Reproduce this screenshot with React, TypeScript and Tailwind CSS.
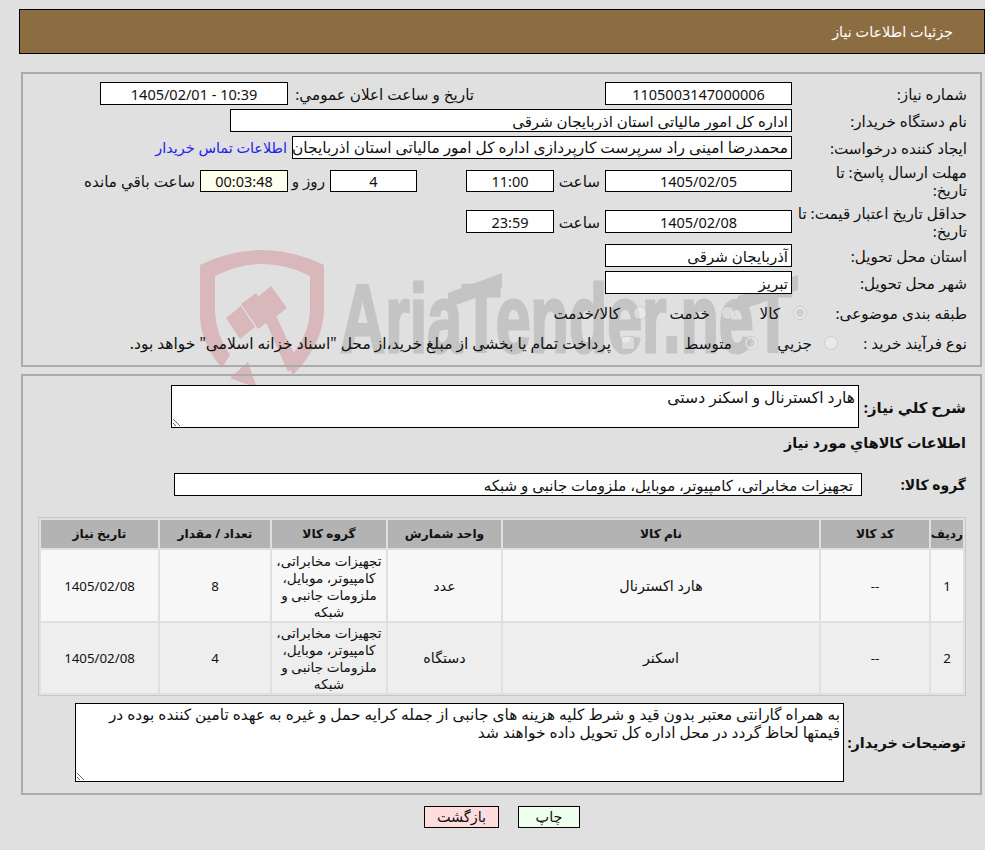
import React from 'react';

// Watermark logo behind the form
const Watermark = () => (
  <svg className="absolute left-0 top-0 pointer-events-none" width="985" height="400" viewBox="0 0 985 400">
    <path d="M200 265 Q262 235 324 265 L324 312 Q322 345 293 375 L285 362 Q308 340 310 312 L310 276 Q262 252 215 276 L215 312 Q216 335 230 355 L222 368 Q202 345 200 318 Z" fill="#d8b8ba" />
    <g fill="#d8b8ba">
      <path d="M226 318 L241 306 L255 327 L240 339 Z" />
      <path d="M241 304 L256 293 L273 318 L258 329 Z" />
      <path d="M258 297 L271 286 L287 308 L273 319 Z" />
      <path d="M266 322 L276 316 L298 362 L288 372 Z" />
      <path d="M230 378 L248 362 L257 388 Z" />
    </g>
    <text direction="ltr" x="340" y="352" fill="#c4c4c4" stroke="#c4c4c4" strokeWidth="3" fontSize="97" fontWeight="700" fontFamily="'Liberation Sans', sans-serif" textLength="452" lengthAdjust="spacingAndGlyphs">AriaTender.neT</text>
    <g fill="#c4c4c4">
      <path d="M448 293 L502 273 L502 288 L448 308 Z" />
      <path d="M738 296 L798 275 L798 290 L738 311 Z" />
    </g>
  </svg>
);

const Field = ({ w, children, bg = 'bg-white', center = false, h = 'h-[23px]', num = false }: { w: string; children?: React.ReactNode; bg?: string; center?: boolean; h?: string; num?: boolean }) => (
  <div className={`${w} ${h} ${bg} border border-black shrink-0 flex items-center overflow-hidden whitespace-nowrap px-[3px] ${center ? 'justify-center' : ''} ${num ? 'text-[14.5px]' : 'text-[15px]'}`}>
    {children}
  </div>
);

const Label = ({ children, w = 'w-[175px]' }: { children: React.ReactNode; w?: string }) => (
  <div className={`${w} shrink-0`}>{children}</div>
);

const Radio = ({ checked = false }: { checked?: boolean }) => (
  <input type="radio" disabled defaultChecked={checked} className="w-[14px] h-[14px] m-0 shrink-0 opacity-70" />
);

const rows = [
  { n: '1', code: '--', name: 'هارد اکسترنال', unit: 'عدد', qty: '8', date: '1405/02/08', bg: 'bg-[#f7f7f7]', h: 'h-[71px]' },
  { n: '2', code: '--', name: 'اسکنر', unit: 'دستگاه', qty: '4', date: '1405/02/08', bg: 'bg-[#eeeeee]', h: 'h-[70px]' },
];

const headers = [
  { t: 'ردیف', w: 'w-[32px]' },
  { t: 'کد کالا', w: 'w-[108px]' },
  { t: 'نام کالا', w: 'w-[316px]' },
  { t: 'واحد شمارش', w: 'w-[113px]' },
  { t: 'گروه کالا', w: 'w-[114px]' },
  { t: 'تعداد / مقدار', w: 'w-[110px]' },
  { t: 'تاریخ نیاز', w: 'w-[117px]' },
];

const group = 'تجهیزات مخابراتی، کامپیوتر، موبایل، ملزومات جانبی و شبکه';
const groupLines = ['تجهیزات مخابراتی،', 'کامپیوتر، موبایل،', 'ملزومات جانبی و', 'شبکه'];

export default function App() {
  return (
    <div dir="rtl" className="relative w-[985px] h-[850px] overflow-hidden bg-[#e0e0e0] text-[15.2px] leading-[18px] text-[#111] font-['Noto_Sans','DejaVu_Sans',sans-serif] pt-[9px]">
      <Watermark />

      {/* header bar */}
      <div className="relative ml-[19px] h-[45px] bg-[#8c6d42] border border-black flex items-center text-white text-[14.4px] pr-[31px]">
        جزئیات اطلاعات نیاز
      </div>

      {/* top form panel */}
      <div className="relative mt-[18px] ml-[21px] mr-[3px] h-[295px] border-2 border-[#ababab] pt-[8px] pr-[13px]">
        <div className="flex items-center h-[23px]">
          <Label>شماره نیاز:</Label>
          <Field w="w-[187px]" center num>1105003147000006</Field>
          <div className="w-[317px] shrink-0 pr-[131px] whitespace-nowrap">تاریخ و ساعت اعلان عمومي:</div>
          <Field w="w-[188px]" center num>10:39 - 1405/02/01</Field>
        </div>

        <div className="flex items-center h-[23px] mt-[4px]">
          <Label>نام دستگاه خریدار:</Label>
          <Field w="w-[562px]">اداره کل امور مالیاتی استان اذربایجان شرقی</Field>
        </div>

        <div className="flex items-center h-[23px] mt-[4px]">
          <Label>ایجاد کننده درخواست:</Label>
          <Field w="w-[500px]"><span className="text-[15.4px]">محمدرضا امینی راد سرپرست کارپردازی اداره کل امور مالیاتی استان اذربایجان شرقی</span></Field>
          <a className="pr-[5px] text-[#2222ee] whitespace-nowrap text-[14.4px]">اطلاعات تماس خریدار</a>
        </div>

        <div className="flex items-center h-[22px] mt-[11px]">
          <Label>مهلت ارسال پاسخ: تا<br />تاریخ:</Label>
          <Field w="w-[187px]" h="h-[22px]" center num>1405/02/05</Field>
          <div className="w-[51px] shrink-0 pr-[5px]">ساعت</div>
          <Field w="w-[88px]" h="h-[22px]" center num>11:00</Field>
          <div className="w-[49px] shrink-0" />
          <Field w="w-[87px]" h="h-[22px]" center num>4</Field>
          <div className="w-[42px] shrink-0 pr-[5px]">روز و</div>
          <Field w="w-[88px]" h="h-[22px]" bg="bg-[#ffffee]" center num>00:03:48</Field>
          <div className="pr-[5px] whitespace-nowrap">ساعت باقي مانده</div>
        </div>

        <div className="flex items-center h-[23px] mt-[18px]">
          <Label>حداقل تاریخ اعتبار قیمت: تا<br />تاریخ:</Label>
          <Field w="w-[187px]" center num>1405/02/08</Field>
          <div className="w-[51px] shrink-0 pr-[5px]">ساعت</div>
          <Field w="w-[88px]" center num>23:59</Field>
        </div>

        <div className="flex items-center h-[23px] mt-[11px]">
          <Label>استان محل تحویل:</Label>
          <Field w="w-[187px]">آذربایجان شرقی</Field>
        </div>

        <div className="flex items-center h-[23px] mt-[4px]">
          <Label>شهر محل تحویل:</Label>
          <Field w="w-[187px]">تبریز</Field>
        </div>

        <div className="flex items-center h-[18px] mt-[10px]">
          <Label w="w-[160px]">طبقه بندی موضوعی:</Label>
          <Radio checked />
          <span className="w-[58px] pr-[13px] shrink-0">کالا</span>
          <Radio />
          <span className="w-[74px] pr-[11px] shrink-0">خدمت</span>
          <Radio />
          <span className="pr-[13px] whitespace-nowrap">کالا/خدمت</span>
        </div>

        <div className="flex items-center h-[18px] mt-[12px]">
          <Label w="w-[129px]">نوع فرآیند خرید :</Label>
          <Radio />
          <span className="w-[66px] pr-[12px] shrink-0 whitespace-nowrap">جزيي</span>
          <Radio checked />
          <span className="w-[109px] pr-[12px] shrink-0 whitespace-nowrap">متوسط</span>
          <input type="checkbox" disabled className="w-[14px] h-[14px] m-0 shrink-0 opacity-70" />
          <span className="pr-[10px] whitespace-nowrap text-[15.5px]">پرداخت تمام یا بخشی از مبلغ خرید،از محل "اسناد خزانه اسلامی" خواهد بود.</span>
        </div>
      </div>

      {/* second panel */}
      <div className="relative mt-[7px] ml-[21px] mr-[3px] h-[421px] border-2 border-[#ababab] pt-[9px] pr-[14px] pl-[14px]">
        <div className="flex items-center h-[43px]">
          <div className="w-[107px] shrink-0 font-bold text-[14.9px] whitespace-nowrap">شرح کلي نیاز:</div>
          <textarea readOnly defaultValue="هارد اکسترنال و اسکنر دستی" className="w-[688px] h-[43px] bg-white border border-black px-[3px] py-[2px] resize outline-none text-[15.6px] leading-[18px]" />
        </div>

        <div className="font-bold mt-[6px] h-[18px] text-[14.4px]">اطلاعات کالاهاي مورد نیاز</div>

        <div className="flex items-center h-[23px] mt-[21px]">
          <div className="w-[104px] shrink-0 font-bold text-[14px] whitespace-nowrap">گروه کالا:</div>
          <Field w="w-[688px]"><span className="pr-[5px]">{group}</span></Field>
        </div>

        <table className="mt-[21px] w-[928px] table-fixed border-separate border-spacing-[2px] border border-[#c8c8c8] text-center text-[14.3px]">
          <thead>
            <tr>
              {headers.map((c) => (
                <th key={c.t} className={`${c.w} h-[28px] bg-[#b3b3b3] font-bold text-[12.2px] p-0`}>{c.t}</th>
              ))}
            </tr>
          </thead>
          <tbody>
            {rows.map((r) => (
              <tr key={r.n} className={r.h}>
                <td className={`${r.bg} p-0 text-[13.3px]`}>{r.n}</td>
                <td className={`${r.bg} p-0 text-[13.3px]`}>{r.code}</td>
                <td className={`${r.bg} p-0`}>{r.name}</td>
                <td className={`${r.bg} p-0`}>{r.unit}</td>
                <td className={`${r.bg} p-0 leading-[17px] text-[13.6px]`}>
                  {groupLines.map((l) => (
                    <div key={l} className="whitespace-nowrap">{l}</div>
                  ))}
                </td>
                <td className={`${r.bg} p-0 text-[13.3px]`}>{r.qty}</td>
                <td className={`${r.bg} p-0 text-[13.3px]`}>{r.date}</td>
              </tr>
            ))}
          </tbody>
        </table>

        <div className="flex items-center h-[79px] mt-[7px]">
          <div className="w-[122px] shrink-0 font-bold text-[14.4px] whitespace-nowrap">توضیحات خریدار:</div>
          <textarea readOnly defaultValue="به همراه گارانتی معتبر بدون قید و شرط کلیه هزینه های جانبی از جمله کرایه حمل و غیره به عهده تامین کننده بوده در قیمتها لحاظ گردد در محل اداره کل تحویل داده خواهند شد" className="w-[769px] h-[79px] bg-white border border-black px-[3px] py-[2px] resize outline-none text-[15.4px] leading-[18px]" />
        </div>
      </div>

      {/* buttons */}
      <div className="relative flex justify-center gap-[19px] mt-[11px] pl-[19px]">
        <button className="w-[62px] h-[22px] bg-[#eeffee] border border-black text-[14.4px]">چاپ</button>
        <button className="w-[75px] h-[22px] bg-[#ffdddd] border border-black text-[14.4px]">بازگشت</button>
      </div>
    </div>
  );
}
